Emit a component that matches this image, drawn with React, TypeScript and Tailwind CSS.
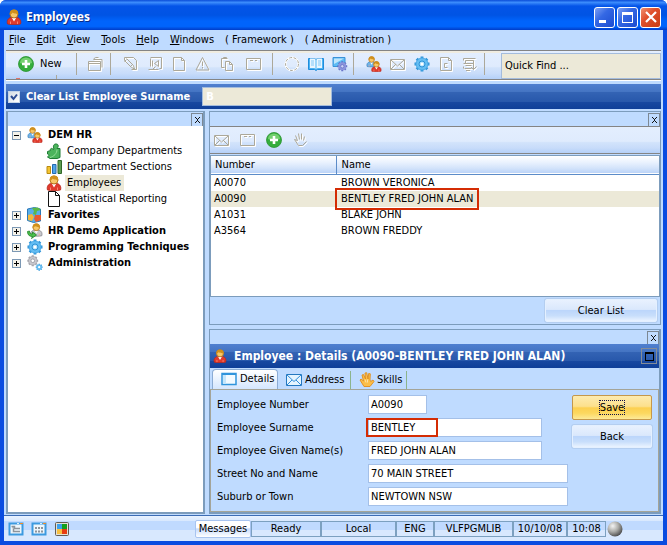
import type { ReactNode } from "react";

const BAND =
  "bg-[linear-gradient(#4f7fd0_0,#4474c2_33%,#3363b4_34%,#2858ab_70%,#1848a0_71%,#0f3f98_100%)]";
const SOFT =
  "bg-[linear-gradient(#e3eefe_0,#dfebfd_55%,#d2e3fb_60%,#c8dcfa_80%,#b4d0f8_100%)]";

type IconProps = { className?: string };

function Svg({ children, className = "h-4 w-4", box = "0 0 16 16" }: { children: ReactNode; className?: string; box?: string }) {
  return (
    <svg viewBox={box} className={`shrink-0 ${className}`} fill="none" aria-hidden="true">
      {children}
    </svg>
  );
}

function PersonShape({ coat = "#e03a2c", edge = "#b8281c" }: { coat?: string; edge?: string }) {
  return (
    <g>
      <path d="M1.500 15c-1-3 .5-6 3.500-6.500h6c3 .5 4.500 3.500 3.500 6.500-3 .8-10 .8-13 0z" fill={coat} stroke={edge} strokeWidth=".8" />
      <path d="M6 9l2 3.500L10 9z" fill="#fff" />
      <circle cx="8" cy="5" r="4" fill="#f8c868" stroke="#a8650f" strokeWidth=".8" />
      <path d="M4 6.500C3 2.500 5 .5 8 .5s5 2 4 6c-.5-2.500-4-1.500-5.500-3C6 5 4.500 5 4 6.500z" fill="#d0901c" />
      <path d="M4.500 12.500v2.500M11.500 12.500v2.500" stroke="#ff9a84" strokeWidth=".8" />
    </g>
  );
}

function Person({ className }: IconProps) {
  return <Svg className={className}><PersonShape /></Svg>;
}

function People({ className }: IconProps) {
  return (
    <Svg className={className}>
      <g transform="scale(.7)"><PersonShape coat="#6db4e8" edge="#2f78b8" /></g>
      <g transform="translate(4.800 4.800) scale(.7)"><PersonShape /></g>
    </Svg>
  );
}

function Plus() {
  return (
    <Svg>
      <circle cx="8" cy="8" r="7.500" fill="#35ad3c" stroke="#2a9430" strokeWidth=".8" />
      <path d="M2 7a6 5.500 0 0 1 12 0c-3 1.500-9 1.500-12 0z" fill="#74d070" />
      <path d="M8 4v8M4 8h8" stroke="#fff" strokeWidth="2.600" />
    </Svg>
  );
}

function Relief({ d, className }: { d: string; className?: string }) {
  return (
    <Svg className={className}>
      <path d={d} stroke="#fff" transform="translate(1 1)" />
      <path d={d} stroke="#aca899" />
    </Svg>
  );
}

const GREY = {
  folder: "M.5 5.500h12v9h-12zM5.500 3.500h8.500v8M1 7.500h11M5.500 3l2-1.500h3",
  edit: "M1.500 1.500h9l3 3v9h-5M1.500 1.500v3l7 7 3 1.500-1-3.500-7-7M1.500 5.500l2-2M7.500 10.500l2-2",
  rewind: "M3.500 2.500v8M1.500 13.500h10M3.500 1.500h11v11h-2M5.500 4.500v6M11.500 4.500l-4 3 4 3zM8.500 10.500l-3 3",
  page: "M2.500 1.500h8l3 3v10h-11zM10.500 1.500v3h3",
  warn: "M7.500 1.500l6.500 12.500h-13zM7.500 5.500v4.500M7.500 11v1.500",
  paste: "M8.500 2.500h-6v9h3M4.500 2.500v-1h3v1M6.500 5.500h4l3 3v6h-7zM10.500 5.500v3h3",
  window: "M.5 2.500h14v11h-14zM4 4.500h3M9 4.500h2",
  mail: "M.5 3.500h14v10h-14zM1 4l6.500 6 6.500-6M1 13l5-5M14 13l-5-5",
  help: "M2.500 1.500h8l3 3v10h-11zM10.500 1.500v3h3M9.500 7.500h-3v4h3",
  printer: "M1.500 2.500h12M3.500 4.500h8v3h-8zM1.500 7.500h3M3.500 9.500h6M2.500 12.500h7M4 14.500h4M11.500 4.500v9M9 11l2.500 2.500 3-3M1.500 4.500v-2M1.500 10.500v2",
  hand: "M5.500 8.500l-2-5M7.500 7.500l-1-6M9.500 7.500v-6M11.500 8.500l1-4M5.500 8.500l-3-1 4 6h4l4-4",
};

function Spinner() {
  return (
    <Svg>
      <circle cx="8" cy="8" r="6.500" stroke="#fff" strokeWidth="2" />
      <circle cx="8" cy="8" r="6.500" stroke="#aca899" strokeDasharray="3 1.500" />
    </Svg>
  );
}

function Book() {
  return (
    <Svg>
      <path d="M.5 2.500h6l1.500 1 1.500-1h6v11h-6l-1.500 1-1.500-1h-6z" fill="#4db4f4" stroke="#1f8ddc" />
      <path d="M2 2.500h4.500l1 1v9.500l-1-1H2zM14 2.500H9.500l-1 1v9.500l1-1H14z" fill="#e8f6ff" />
      <path d="M3 5h3M3 7h3M3 9h3M10 5h3M10 7h3M10 9h3" stroke="#80c8f6" />
    </Svg>
  );
}

const TEETH = "M8 .5v15M.5 8h15M2.700 2.700l10.600 10.600M13.300 2.700L2.700 13.300";

function Gear({ className }: IconProps) {
  return (
    <Svg className={className}>
      <path d={TEETH} stroke="#2c93d8" strokeWidth="2.800" />
      <circle cx="8" cy="8" r="6" fill="#64bdf2" stroke="#4cabe8" />
      <circle cx="8" cy="8" r="3" fill="#a6dcfb" stroke="#2c93d8" />
      <circle cx="8" cy="8" r="1.500" fill="#fff" />
    </Svg>
  );
}

function ScreenGear() {
  return (
    <Svg>
      <path d="M1 1.500h12v9H1z" fill="#5dbcf4" stroke="#3a92d8" />
      <path d="M2 2.500h10L2 8z" fill="#bfe6fc" />
      <g transform="translate(5 5) scale(.66)">
        <path d={TEETH} stroke="#5f6cc4" strokeWidth="3" />
        <circle cx="8" cy="8" r="6" fill="#8b94dc" />
        <circle cx="8" cy="8" r="2.500" fill="#cfd4f6" stroke="#5f6cc4" />
      </g>
    </Svg>
  );
}

function GreyGears() {
  return (
    <Svg>
      <g transform="scale(.72)">
        <path d={TEETH} stroke="#a4a4ac" strokeWidth="3" />
        <circle cx="8" cy="8" r="6" fill="#c8c8ce" stroke="#a4a4ac" />
        <circle cx="8" cy="8" r="2.500" fill="#fff" stroke="#909098" />
      </g>
      <g transform="translate(8.500 8.500) scale(.46)">
        <path d={TEETH} stroke="#2c93d8" strokeWidth="3" />
        <circle cx="8" cy="8" r="6" fill="#64bdf2" />
        <circle cx="8" cy="8" r="2.500" fill="#fff" />
      </g>
    </Svg>
  );
}

function Puzzle() {
  return (
    <Svg>
      <path d="M1.500 8.500l3-1c-1-2 2-3 2.500-1l1-.5c-1.500-3 0-5.500 2.500-5s2 3 .5 4.500h3v9l-3 1H4l-2.500-1.500c2-1 1.500-3 0-3z" fill="#4cb45c" stroke="#1f7c34" />
      <path d="M4 14.500c4-1 7-4 7-8" stroke="#93dc98" />
    </Svg>
  );
}

function Bars() {
  return (
    <Svg>
      <path d="M1 7.500h3.500v7H1z" fill="#f4c430" stroke="#b88a10" />
      <path d="M6.500 5.500H10v9H6.500z" fill="#4ea4e8" stroke="#2468b0" />
      <path d="M12 1.500h3.500v13H12z" fill="#5c9c50" stroke="#306828" />
    </Svg>
  );
}

function PlainPage() {
  return (
    <Svg>
      <path d="M2.500.5h7l4 4v11h-11z" fill="#fff" stroke="#111" />
      <path d="M9.500.5v4h4" stroke="#111" />
    </Svg>
  );
}

function Favourites() {
  return (
    <Svg>
      <path d="M.5 2l7-1.500 6 1.500v12l-7 1.500-6-2z" fill="#58aee8" stroke="#2c78b8" />
      <path d="M5 1l2 3-1 3 3 1 1-4 4-1-3-2.500z" fill="#5cb848" />
      <path d="M1 8l4-1 2 3-2 4-4-1z" fill="#f4b83a" />
      <path d="M8 8h6v5l-5 2-2-3z" fill="#e85a30" />
    </Svg>
  );
}

function PersonCheck() {
  return (
    <Svg>
      <g transform="translate(2.500 0) scale(.85)"><PersonShape coat="#c8c8cc" edge="#808088" /></g>
      <path d="M.5 8.500c0 3.500 2 5 5 5l-1 2 5-3.500-4-3v2c-2 0-3-1-3-3z" fill="#4cc04c" stroke="#1f8428" strokeWidth=".8" />
    </Svg>
  );
}

function BlueMail() {
  return (
    <Svg>
      <path d="M.5 2.500h15v11H.5z" fill="#e4f4ff" stroke="#2478c0" />
      <path d="M1 3l7 6.500L15 3M1 13l5-5M15 13l-5-5" stroke="#2f8cd8" />
    </Svg>
  );
}

function BlueWindow() {
  return (
    <Svg>
      <path d="M1 2.500h14v11H1z" fill="#f2faff" stroke="#2f94dc" strokeWidth="1.500" />
      <path d="M2 4h3v9H2z" fill="#c4e6fb" />
      <path d="M1 3h14" stroke="#2f94dc" strokeWidth="2" />
    </Svg>
  );
}

function YellowHand() {
  return (
    <Svg>
      <path d="M5 14.500L1 8l1-1 2.500 2L3 3l1.500-.5L6.500 7 6 1l1.700-.3L9 7l.7-5.500 1.600.3L11 8l.7 1.500L14 8l1 1.500-4 5z" fill="#fbbe48" stroke="#e08c1c" strokeWidth=".9" />
      <path d="M6 7.500l1 3M8.500 7.500v3" stroke="#fde2a4" />
    </Svg>
  );
}

function ViewIcon({ grid }: { grid?: boolean }) {
  return (
    <Svg>
      <path d="M1.500 2.500h13v11h-13z" fill="#eef6fc" stroke="#3c9ae0" strokeWidth="2" />
      <path d="M9 2.500h2" stroke="#d8eefc" />
      <path d="M12 2.500h3" stroke="#f08c28" />
      {grid ? (
        <path d="M4 7h8M4 10.500h8" stroke="#8c949c" strokeWidth="2" strokeDasharray="2 1" />
      ) : (
        <path d="M3.500 5.500h3v2h5.500M5.500 7.500v3H12M4.500 6.500h1" stroke="#8c949c" strokeWidth="1.500" />
      )}
    </Svg>
  );
}

function Tiles() {
  return (
    <Svg>
      <rect x="1.500" y="1.500" width="13" height="13" rx="1" fill="#e4e0d4" stroke="#605c54" />
      <path d="M3 3h5v5H3z" fill="#3ca0ec" />
      <path d="M8 3h5v5H8z" fill="#14a01c" />
      <path d="M3 8h5v5H3z" fill="#f8c040" />
      <path d="M8 8h5v5H8z" fill="#e83c10" />
    </Svg>
  );
}

function Ball() {
  return (
    <Svg>
      <defs>
        <radialGradient id="ball" cx=".35" cy=".3" r=".75">
          <stop offset="0" stopColor="#f4f4f4" />
          <stop offset=".5" stopColor="#acaca8" />
          <stop offset="1" stopColor="#484848" />
        </radialGradient>
      </defs>
      <circle cx="8" cy="8" r="7.500" fill="url(#ball)" />
    </Svg>
  );
}

function ToolButton({ label, children }: { label: string; children: ReactNode }) {
  return (
    <button type="button" aria-label={label} className="flex w-6 shrink-0 items-center justify-center">
      {children}
    </button>
  );
}

function Divider() {
  return <span className="h-[22px] w-px shrink-0 bg-[#aca899]" />;
}

function CaptionButton({ label, red, children }: { label: string; red?: boolean; children: ReactNode }) {
  return (
    <button
      type="button"
      aria-label={label}
      className={`flex h-[21px] w-[21px] items-center justify-center rounded-[3px] border border-white ${red ? "bg-[linear-gradient(135deg,#f09070,#e0502c_40%,#c83c14)]" : "bg-[linear-gradient(135deg,#7ca0f4,#3468e4_40%,#1c4cd0)]"}`}
    >
      {children}
    </button>
  );
}

function PanelHead() {
  return (
    <div className="flex h-[14px] shrink-0 justify-end bg-[#bfdbff] pt-px">
      <button
        type="button"
        aria-label="Close panel"
        className="flex h-[13px] w-3 items-center justify-center border border-b-0 border-[#7c8894]"
      >
        <svg viewBox="0 0 5 6" className="h-[6px] w-[5px]" shapeRendering="crispEdges" aria-hidden="true">
          <path d="M0 0h1v1h1v1h1v-1h1v-1h1v1h-1v1h-1v2h1v1h1v1h-1v-1h-1v-1h-1v1h-1v1h-1v-1h1v-1h1v-2h-1v-1h-1z" fill="#111" />
        </svg>
      </button>
    </div>
  );
}

const MENUS = ["File", "Edit", "View", "Tools", "Help", "Windows"];

const CHILDREN = [
  { name: "Company Departments", icon: <Puzzle /> },
  { name: "Department Sections", icon: <Bars /> },
  { name: "Employees", icon: <Person />, active: true },
  { name: "Statistical Reporting", icon: <PlainPage /> },
];

const ROOTS = [
  { name: "Favorites", icon: <Favourites /> },
  { name: "HR Demo Application", icon: <PersonCheck /> },
  { name: "Programming Techniques", icon: <Gear /> },
  { name: "Administration", icon: <GreyGears /> },
];

function Branch({ name, icon, open }: { name: string; icon: ReactNode; open?: boolean }) {
  return (
    <div className="flex h-4 items-center font-bold">
      <button
        type="button"
        aria-label={open ? `Collapse ${name}` : `Expand ${name}`}
        className="mr-[6px] ml-1 flex h-[9px] w-[9px] shrink-0 items-center justify-center border border-[#7c98b4] bg-[#f4f2ea]"
      >
        <svg viewBox="0 0 5 5" className="h-[5px] w-[5px]" shapeRendering="crispEdges" aria-hidden="true">
          <path d={open ? "M0 2h5v1H0z" : "M0 2h2V0h1v2h2v1H3v2H2V3H0z"} fill="#000" />
        </svg>
      </button>
      {icon}
      <span className="ml-[5px] whitespace-nowrap">{name}</span>
    </div>
  );
}

const EMPLOYEES = [
  ["A0070", "BROWN VERONICA"],
  ["A0090", "BENTLEY FRED JOHN ALAN"],
  ["A1031", "BLAKE JOHN"],
  ["A3564", "BROWN FREDDY"],
];

const FIELDS = [
  { id: "number", label: "Employee Number", value: "A0090", width: "w-[59px]" },
  { id: "surname", label: "Employee Surname", value: "BENTLEY", width: "w-[174px]", marked: true },
  { id: "given", label: "Employee Given Name(s)", value: "FRED JOHN ALAN", width: "w-[174px]" },
  { id: "street", label: "Street No and Name", value: "70 MAIN STREET", width: "w-[200px]" },
  { id: "suburb", label: "Suburb or Town", value: "NEWTOWN NSW", width: "w-[200px]" },
];

const STATUS = [
  { text: "Ready", width: "w-[70px]" },
  { text: "Local", width: "w-[75px]" },
  { text: "ENG", width: "w-[38px]" },
  { text: "VLFPGMLIB", width: "w-[79px]" },
  { text: "10/10/08", width: "w-[54px]" },
  { text: "10:08", width: "w-[39px]" },
];

const PUSH =
  "rounded-[2px] border border-[#e4f0ff] bg-[linear-gradient(#e8f1fe_0,#dae8fc_45%,#bcd6fb_50%,#c8defb_75%,#eaf3ff_100%)] shadow-[0_0_0_1px_#b4cef0]";

export default function App() {
  return (
    <div className="flex h-screen min-h-[500px] flex-col overflow-hidden rounded-t-[6px] bg-[#0a4ce0] font-['DejaVu_Sans_Condensed','DejaVu_Sans',sans-serif] text-[11px] leading-4 text-black">
      <header className="flex h-[30px] shrink-0 items-center bg-[linear-gradient(#0a4cd8_0,#3c8cfc_8%,#0454e8_20%,#0054e4_50%,#0064fc_70%,#0064fc_88%,#003cc8_100%)] pt-1 pr-[6px] pl-[6px]">
        <Person />
        <h1 className="ml-1 flex-1 font-['Noto_Sans',sans-serif] text-[12px] font-bold text-white [text-shadow:1px_1px_#082c88]">Employees</h1>
        <div className="flex gap-[2px]">
          <CaptionButton label="Minimize"><span className="mt-2 mr-1 h-[3px] w-[7px] bg-white" /></CaptionButton>
          <CaptionButton label="Maximize"><span className="h-[11px] w-[11px] border border-t-[3px] border-white" /></CaptionButton>
          <CaptionButton label="Close" red>
            <svg viewBox="0 0 12 12" className="h-3 w-3" aria-hidden="true"><path d="M1 1l10 10M11 1L1 11" stroke="#fff" strokeWidth="2.200" /></svg>
          </CaptionButton>
        </div>
      </header>

      <div className="mx-1 mb-1 flex min-h-0 flex-1 flex-col bg-[#bfdbff]">
        <nav className="flex h-[20px] shrink-0 items-center gap-[11px] pl-[5px]">
          {MENUS.map((m) => (
            <button key={m} type="button"><span className="underline">{m[0]}</span>{m.slice(1)}</button>
          ))}
          <button type="button">( Framework )</button>
          <button type="button">( Administration )</button>
        </nav>

        <div className={`mx-[2px] flex h-[30px] shrink-0 border-t border-b border-[#848484] ${SOFT} shadow-[0_1px_#fff]`}>
          <div className="flex h-full min-w-0 flex-1 flex-col overflow-hidden border-t-2 border-[#f0ece0]">
            <div className="flex h-[22px] shrink-0 items-center">
              <button type="button" className="flex w-[70px] shrink-0 items-center gap-[6px] pl-3"><Plus />New</button>
              <Divider />
              <span className="w-[7px] shrink-0" />
              <ToolButton label="Open"><Relief d={GREY.folder} /></ToolButton>
              <span className="w-[2px] shrink-0" />
              <Divider />
              <span className="w-2 shrink-0" />
              <ToolButton label="Edit"><Relief d={GREY.edit} /></ToolButton>
              <ToolButton label="First"><Relief d={GREY.rewind} /></ToolButton>
              <ToolButton label="New page"><Relief d={GREY.page} /></ToolButton>
              <ToolButton label="Warnings"><Relief d={GREY.warn} /></ToolButton>
              <ToolButton label="Copy"><Relief d={GREY.paste} /></ToolButton>
              <span className="w-[3px] shrink-0" />
              <ToolButton label="Window"><Relief d={GREY.window} /></ToolButton>
              <span className="w-[6px] shrink-0" />
              <Divider />
              <span className="w-[7px] shrink-0" />
              <ToolButton label="Refresh"><Spinner /></ToolButton>
              <ToolButton label="Dictionary"><Book /></ToolButton>
              <ToolButton label="Screen settings"><ScreenGear /></ToolButton>
              <span className="w-px shrink-0" />
              <Divider />
              <span className="w-2 shrink-0" />
              <ToolButton label="People"><People /></ToolButton>
              <ToolButton label="Mail"><Relief d={GREY.mail} /></ToolButton>
              <ToolButton label="Settings"><Gear /></ToolButton>
              <ToolButton label="Document help"><Relief d={GREY.help} /></ToolButton>
              <ToolButton label="Print"><Relief d={GREY.printer} /></ToolButton>
              <span className="w-[2px] shrink-0" />
              <Divider />
            </div>
            <div className="flex h-1 shrink-0 items-end pl-[10px]">
              <span className="h-px w-1 bg-[#e07468]" />
              <span className="ml-9 h-1 w-px bg-[#aca899]" />
            </div>
          </div>
          <input
            aria-label="Quick Find"
            defaultValue="Quick Find ..."
            className="mt-[2px] w-40 shrink-0 border border-[#a4bcdc] bg-[#ece9d8] px-[3px] outline-none"
          />
        </div>

        <div className={`mx-[2px] mt-1 flex h-[25px] shrink-0 items-center text-white ${BAND}`}>
          <span className="relative mx-[2px] flex">
            <input
              id="clear"
              type="checkbox"
              defaultChecked
              className="peer h-3 w-3 shrink-0 appearance-none border border-[#c4d4e8] bg-[linear-gradient(135deg,#d4dce4,#fff)]"
            />
            <svg viewBox="0 0 12 12" className="pointer-events-none absolute inset-0 hidden h-3 w-3 peer-checked:block" fill="none" aria-hidden="true">
              <path d="M3 5l2.500 3L9 3.500" stroke="#2c4c94" strokeWidth="2" />
            </svg>
          </span>
          <label htmlFor="clear" className="ml-1 font-bold">Clear List</label>
          <label htmlFor="find" className="ml-1 font-bold">Employee Surname</label>
          <input id="find" defaultValue="B" className="ml-3 h-[19px] w-[130px] border border-[#a4bcdc] bg-[#ece9d8] px-[3px] font-bold text-white outline-none" />
        </div>

        <main className="mx-[2px] mt-[2px] flex min-h-0 flex-1 gap-1">
          <aside className="flex w-[199px] shrink-0 flex-col border-2 border-t border-[#7c9cbc] bg-white">
            <PanelHead />
            <div className="pt-px">
              <Branch name="DEM HR" icon={<People />} open />
              {CHILDREN.map((c) => (
                <div key={c.name} className="flex h-4 items-center pl-[38px]">
                  {c.icon}
                  <a href="#" className={`ml-[3px] h-4 pr-[3px] pl-[2px] whitespace-nowrap ${c.active ? "bg-[#ece9d8]" : ""}`}>{c.name}</a>
                </div>
              ))}
              {ROOTS.map((r) => <Branch key={r.name} {...r} />)}
            </div>
          </aside>

          <div className="flex min-w-0 flex-1 flex-col gap-1">
            <section className="flex min-h-0 flex-1 flex-col border border-[#7c9cbc]">
              <PanelHead />
              <div className={`flex h-[28px] shrink-0 items-center border-t border-b border-[#848484] ${SOFT}`}>
                <ToolButton label="Mail"><Relief d={GREY.mail} /></ToolButton>
                <span className="w-[2px]" />
                <ToolButton label="Window"><Relief d={GREY.window} /></ToolButton>
                <span className="w-[2px]" />
                <ToolButton label="Add employee"><Plus /></ToolButton>
                <span className="w-[2px]" />
                <ToolButton label="Drag"><Relief d={GREY.hand} /></ToolButton>
              </div>
              <div className="mt-px min-h-0 flex-1 border border-[#7c9cbc] bg-white">
                <table className="w-full table-fixed border-collapse text-left">
                  <thead>
                    <tr className="h-[18px] border-b border-[#5c8cc8] bg-[linear-gradient(#fff_0,#e8f1fe_40%,#d4e4fb_70%,#bcd4f8_100%)]">
                      <th className="w-[125px] border-r border-[#5c8cc8] py-0 pl-1 font-normal">Number</th>
                      <th className="py-0 pl-[5px] font-normal">Name</th>
                    </tr>
                  </thead>
                  <tbody>
                    {EMPLOYEES.map(([no, name], i) => (
                      <tr key={no} className={`h-4 ${i === 1 ? "bg-[#ece9d8]" : ""}`}>
                        <td className="p-0 pl-[3px]">{no}</td>
                        <td className="p-0 pl-[5px]">
                          {i === 1 ? (
                            <span className="relative block w-max">
                              {name}
                              <span className="absolute -inset-x-[6px] -inset-y-[3px] border-2 border-[#d42c04]" />
                            </span>
                          ) : name}
                        </td>
                      </tr>
                    ))}
                  </tbody>
                </table>
              </div>
              <div className="flex h-[27px] shrink-0 items-center justify-end pr-[3px]">
                <button type="button" className={`h-[23px] w-28 ${PUSH}`}>Clear List</button>
              </div>
            </section>

            <section className="flex shrink-0 flex-col border-2 border-t border-l border-[#7c9cbc]">
              <PanelHead />
              <div className={`flex h-[24px] items-center pr-[2px] pl-[3px] text-white ${BAND}`}>
                <Person className="h-[14px] w-[14px]" />
                <h2 className="ml-[7px] flex-1 text-[12px] font-bold whitespace-nowrap">Employee : Details (A0090-BENTLEY FRED JOHN ALAN)</h2>
                <button type="button" aria-label="Maximize panel" className="flex h-4 w-4 items-center justify-center border border-[#848c98]">
                  <span className="h-[9px] w-[9px] border border-t-2 border-black" />
                </button>
              </div>
              <div role="tablist" className="flex h-[21px] items-end pt-px pl-[2px]">
                <button type="button" role="tab" aria-selected="true" className="flex h-[20px] w-[66px] items-center gap-[3px] rounded-t-[4px] border border-b-0 border-[#8cacd4] bg-[linear-gradient(#fff,#d4e6fe)] pb-px pl-2">
                  <BlueWindow />Details
                </button>
                <button type="button" role="tab" aria-selected="false" className="flex h-[18px] w-[73px] items-center gap-[3px] border-r border-[#8cb48c] pl-2">
                  <BlueMail />Address
                </button>
                <button type="button" role="tab" aria-selected="false" className="flex h-[18px] w-[56px] items-center gap-[2px] border-r border-[#8cb48c] pl-2">
                  <YellowHand />Skills
                </button>
              </div>
              <form className="flex justify-between border border-[#a4a498] pt-[5px] pr-[6px] pb-[5px] pl-[6px]">
                <div className="flex flex-col gap-1">
                  {FIELDS.map((f) => (
                    <div key={f.id} className="flex h-[19px] items-center">
                      <label htmlFor={f.id} className="w-[151px] shrink-0 whitespace-nowrap">{f.label}</label>
                      <span className="relative flex">
                        <input id={f.id} defaultValue={f.value} className={`h-[19px] border border-[#a4c0e8] bg-white px-[2px] outline-none ${f.width}`} />
                        {f.marked && <span className="pointer-events-none absolute top-0 -left-[2px] h-[19px] w-[72px] border-2 border-[#d42c04]" />}
                      </span>
                    </div>
                  ))}
                </div>
                <div className="flex flex-col gap-[5px]">
                  <button type="button" className="h-[25px] w-20 rounded-[2px] border border-[#c4984c] bg-[linear-gradient(#fdebb0_0,#fce08c_45%,#fcd050_52%,#fcd860_75%,#fdea98_100%)]">
                    <span className="border border-dotted border-[#101048]">Save</span>
                  </button>
                  <button type="button" className={`h-[23px] w-20 ${PUSH}`}>Back</button>
                </div>
              </form>
            </section>
          </div>
        </main>

        <footer className="mt-px flex h-[26px] shrink-0 items-center border-t border-[#3c6cb4] bg-[linear-gradient(#e8f2ff_0,#d8e8fe_20%,#c0daff_22%,#c0daff_55%,#d8e8fe_58%,#d8e8fe_100%)] pl-1">
          <div className="flex flex-1 gap-[7px]">
            <button type="button" aria-label="Tree view"><ViewIcon /></button>
            <button type="button" aria-label="Grid view"><ViewIcon grid /></button>
            <button type="button" aria-label="Tiles"><Tiles /></button>
          </div>
          <button type="button" className="h-[18px] w-[56px] rounded-[2px] border border-[#a8c4f0] bg-[linear-gradient(#fff_40%,#c8dcfc_50%,#fff)]">Messages</button>
          {STATUS.map((s) => (
            <span key={s.text} className={`flex h-4 shrink-0 items-center justify-center border border-[#7ca0c0] ${s.width}`}>{s.text}</span>
          ))}
          <span className="mr-[40px] ml-px"><Ball /></span>
        </footer>
      </div>
    </div>
  );
}
